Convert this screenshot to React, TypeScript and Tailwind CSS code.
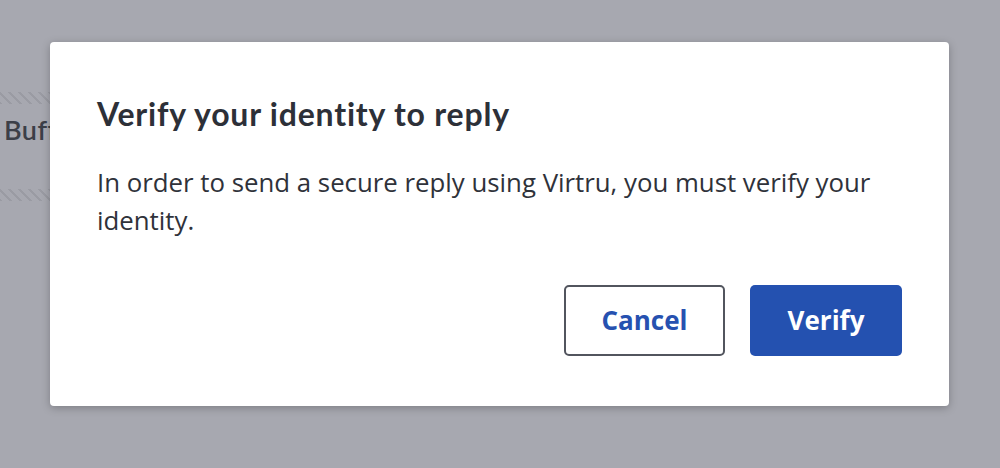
export default function App() {
  return (
    <div className="relative h-[468px] w-[1000px] overflow-hidden bg-[#a7a8b0] font-['Open_Sans',sans-serif]">
      <div className="flex flex-col pt-[92px]">
        <div className="h-[12px] w-[60px] bg-[repeating-linear-gradient(45deg,#9a9ba3_0px,#9a9ba3_2px,transparent_2px,transparent_7px)]" />
        <div className="pl-[4px] pt-[10px] font-['Lato',sans-serif] text-[27px] font-semibold leading-[32px] tracking-[0.5px] text-[#3c3f48]">Buffer</div>
        <div className="mt-[43px] h-[12px] w-[60px] bg-[repeating-linear-gradient(45deg,#9a9ba3_0px,#9a9ba3_2px,transparent_2px,transparent_7px)]" />
      </div>

      <div className="absolute left-[50px] top-[42px] flex h-[364px] w-[899px] flex-col rounded-[4px] bg-white px-[47px] pt-[52px] shadow-[0_2px_8px_rgba(0,0,0,0.25)]">
        <h2 className="font-['Lato',sans-serif] text-[32px] font-bold leading-[40px] tracking-[0.8px] text-[#2d3038]">
          Verify your identity to reply
        </h2>
        <p className="mt-[29px] text-[25.8px] leading-[38px] text-[#2f323a]">
          In order to send a secure reply using Virtru, you must verify your identity.
        </p>
        <div className="mt-[46px] flex justify-end gap-[25px]">
          <button className="flex h-[71px] w-[161px] items-center justify-center rounded-[5px] border-2 border-[#52555e] bg-white text-[26px] font-bold text-[#2651b0]">
            Cancel
          </button>
          <button className="flex h-[71px] w-[152px] items-center justify-center rounded-[5px] bg-[#2451b0] text-[26px] font-bold text-white">
            Verify
          </button>
        </div>
      </div>
    </div>
  );
}
